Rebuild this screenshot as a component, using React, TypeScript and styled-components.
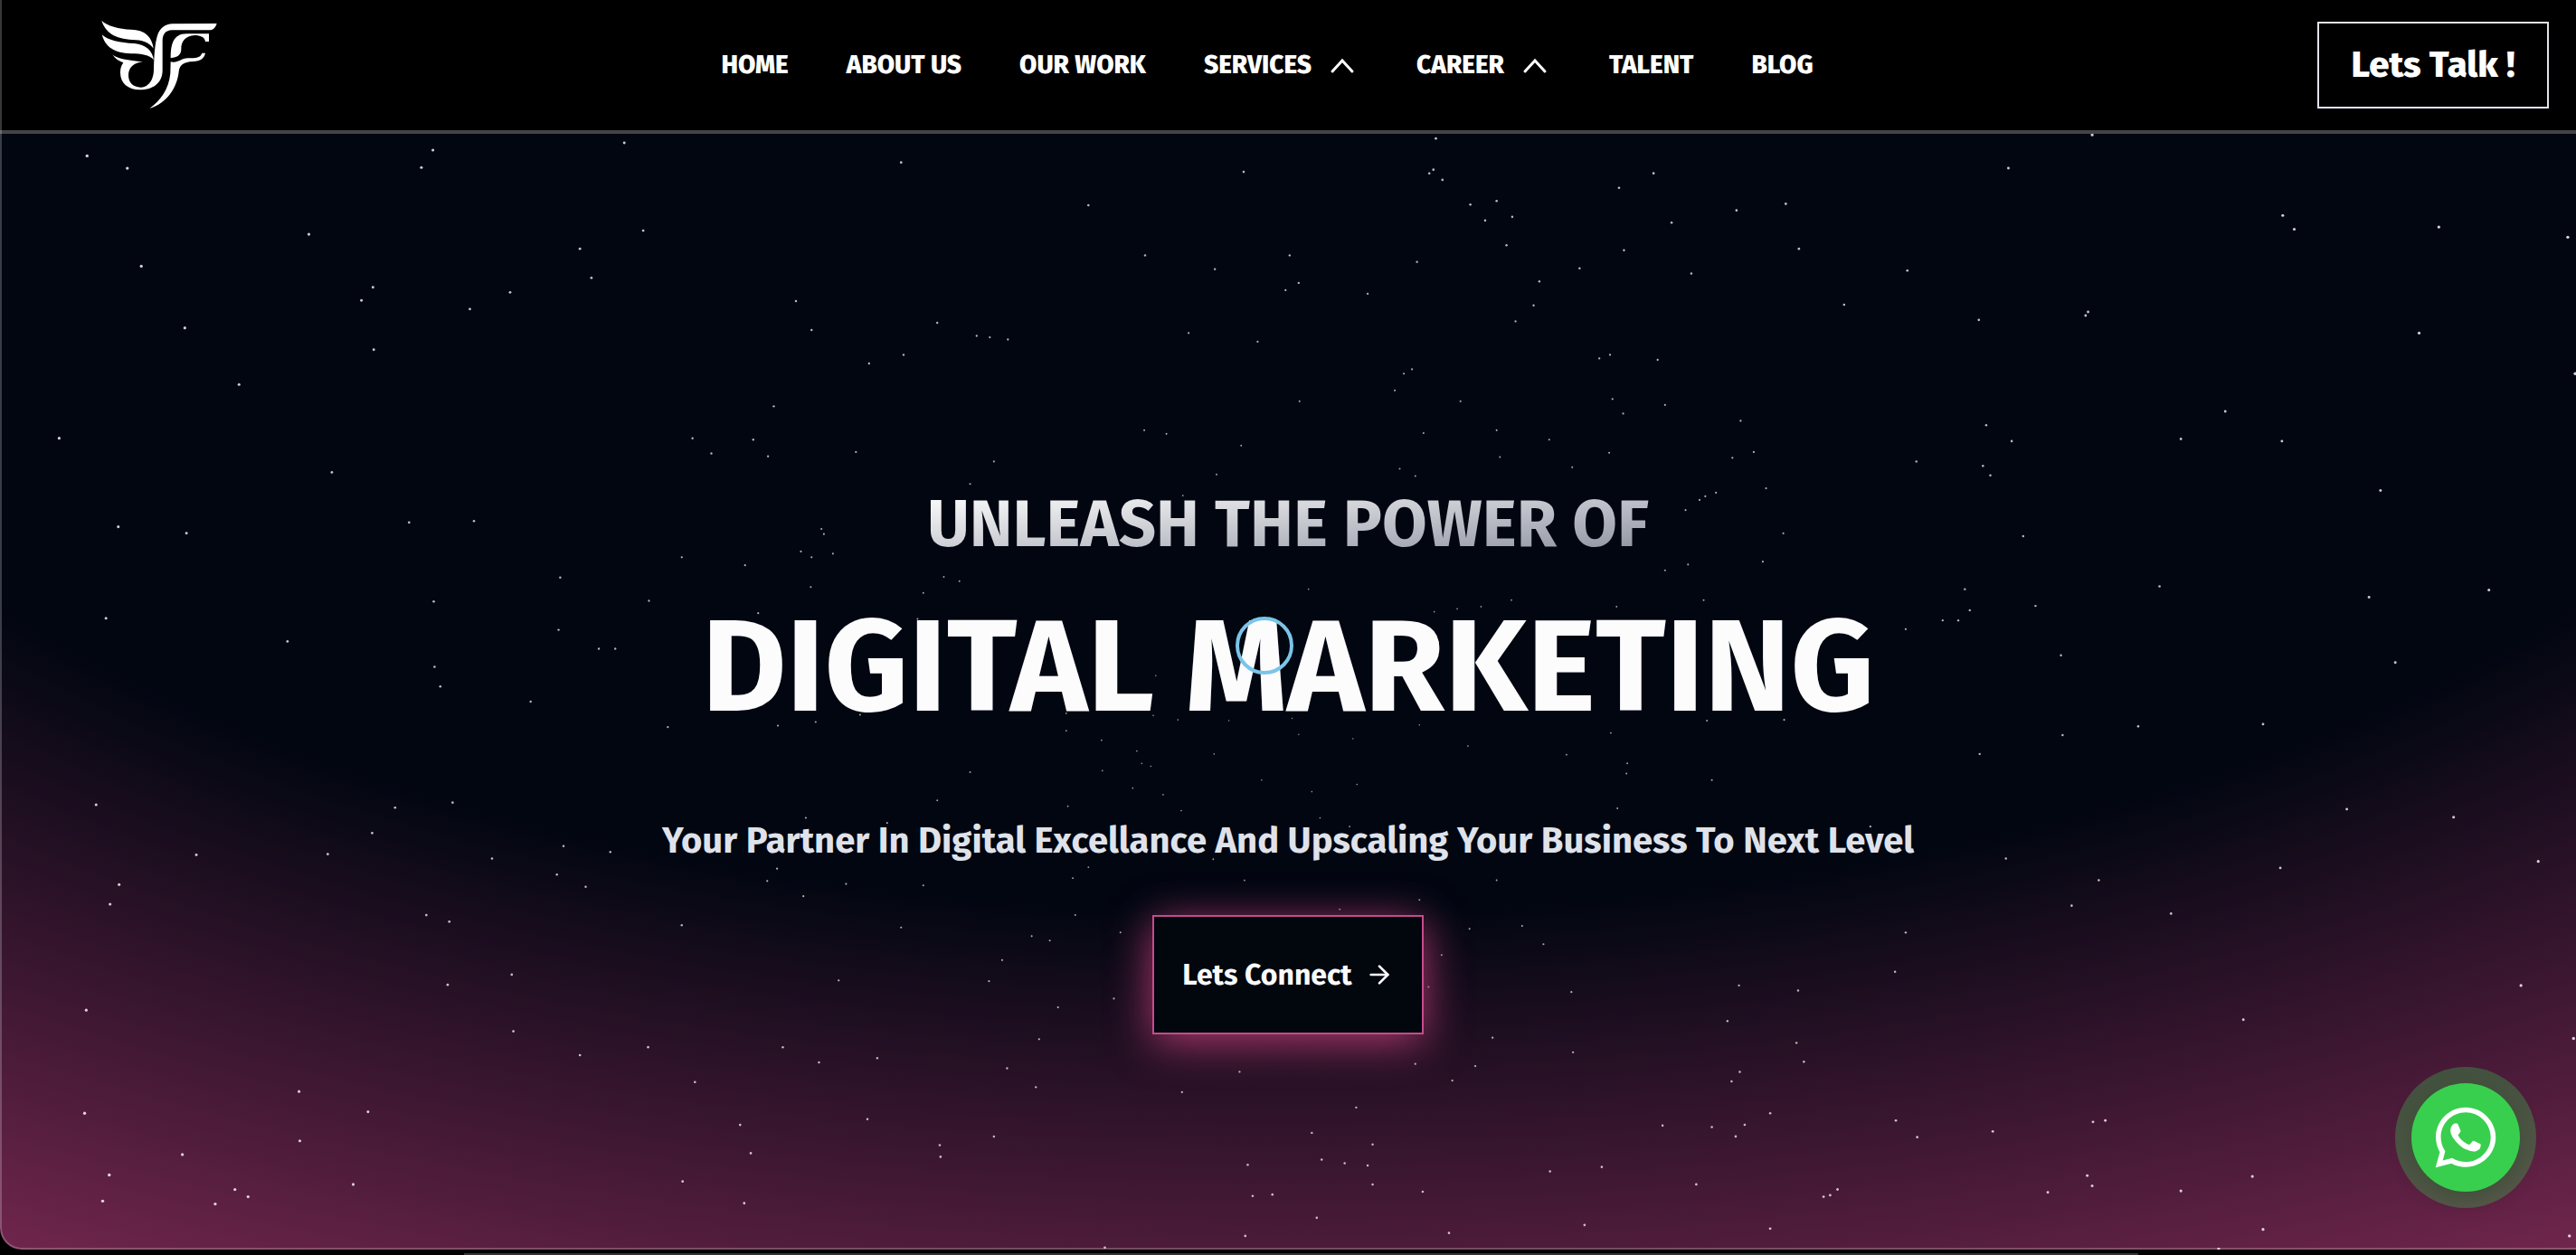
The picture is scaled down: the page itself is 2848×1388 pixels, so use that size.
import React from 'react';
import styled, { createGlobalStyle } from 'styled-components';
import { FaWhatsapp } from 'react-icons/fa';
import { FiArrowRight } from 'react-icons/fi';

const GlobalStyle = createGlobalStyle`
  *, *::before, *::after { box-sizing: border-box; }
  body {
    margin: 0;
    background: #000;
    color: #fff;
    font-family: "Fira Sans", "Open Sans", "Noto Sans", sans-serif;
    -webkit-font-smoothing: antialiased;
  }
`;

const Page = styled.div`
  position: relative;
  display: flex;
  flex-direction: column;
  min-height: 100vh;
  background: #000;
`;

const Frame = styled.div`
  position: relative;
  flex: 1;
  display: flex;
  flex-direction: column;
  margin-bottom: 6px;
  border-bottom-left-radius: 24px;
  overflow: hidden;

  &::after {
    content: '';
    position: absolute;
    inset: 0;
    border: solid rgba(255, 255, 255, 0.22);
    border-width: 0 0 2px 2px;
    border-bottom-left-radius: 24px;
    pointer-events: none;
  }
`;

const Header = styled.header`
  display: grid;
  grid-template-columns: 1fr auto 1fr;
  align-items: center;
  height: 148px;
  padding: 0 30px 0 112px;
  background: #000;
  border-bottom: 4px solid #444446;
`;

const LogoLink = styled.a`
  display: flex;
  justify-self: start;
  color: #fff;
`;

const Nav = styled.nav`
  display: flex;
  align-items: center;
  gap: 64px;
  margin-right: 128px;
`;

const NavLink = styled.a`
  display: flex;
  align-items: center;
  gap: 14px;
  color: #fff;
  font-size: 28px;
  font-weight: 800;
  line-height: 40px;
  text-decoration: none;
  white-space: nowrap;
`;

const Chevron = styled.svg`
  width: 38px;
  height: 32px;
`;

const TalkButton = styled.button`
  justify-self: end;
  width: 256px;
  height: 96px;
  border: 2px solid #e2e4ea;
  background: #000;
  color: #fff;
  font: inherit;
  font-size: 40px;
  font-weight: 800;
  line-height: 48px;
`;

const Hero = styled.main`
  position: relative;
  flex: 1;
  display: flex;
  flex-direction: column;
  align-items: center;
  padding: 396px 48px 96px;
  background: radial-gradient(125% 139% at 50% 0, #010611 50%, #ad376e 100%);
  text-align: center;
`;

const Sky = styled.svg`
  position: absolute;
  inset: 0;
  width: 100%;
  height: 100%;
  fill: #f4e9f2;
`;

const Lead = styled.h2`
  position: relative;
  margin: 0;
  font-size: 72px;
  font-weight: 700;
  line-height: 72px;
  color: transparent;
  background: linear-gradient(to bottom right, #fff, #d1d3d8 40%, #8a8f9e);
  background-clip: text;
  -webkit-background-clip: text;
`;

const Title = styled.h1`
  position: relative;
  margin: 50px 0 0;
  font-size: 144px;
  font-weight: 700;
  line-height: 144px;
  color: #fcfcfd;
`;

const Tagline = styled.p`
  position: relative;
  margin: 96px 0 0;
  font-size: 40px;
  font-weight: 700;
  line-height: 48px;
  color: #dfe2ea;
`;

const ConnectButton = styled.button`
  position: relative;
  display: flex;
  align-items: center;
  justify-content: center;
  gap: 14px;
  width: 300px;
  height: 132px;
  margin-top: 58px;
  border: 2px solid #c64b8c;
  background: #02060d;
  box-shadow: 0 8px 48px #b03a70;
  color: #fafafc;
  font: inherit;
  font-size: 32px;
  font-weight: 700;
  line-height: 40px;
`;

const CursorRing = styled.span`
  position: absolute;
  top: 682px;
  left: calc(50% - 58px);
  width: 64px;
  height: 64px;
  border: 4px solid #7ac5e9;
  border-radius: 50%;
  pointer-events: none;
`;

const ChatLink = styled.a`
  position: fixed;
  right: 62px;
  bottom: 70px;
  display: flex;
  align-items: center;
  justify-content: center;
  width: 120px;
  height: 120px;
  border-radius: 50%;
  background: #39cf4e;
  box-shadow: 0 0 0 18px rgba(57, 207, 79, 0.3), 0 8px 24px rgba(0, 0, 0, 0.3);
  color: #fff;
`;

const NextPanel = styled.div`
  position: absolute;
  left: 18%;
  right: 17%;
  bottom: 0;
  height: 2px;
  background: #343436;
`;

/* Star positions for the two halves of the sky, as points of a 1568 unit square. */
const LEFT_STARS = [
  106,52, 155,69, 527,44, 513,68, 760,34, 1097,61, 1325,120, 1514,74, 376,160, 783,155, 706,180, 720,220, 172,204,
  454,233, 440,251, 621,240, 572,263, 225,289, 455,319, 291,367, 72,441, 404,488, 144,563, 227,572, 129,689, 350,721,
  969,252, 988,292, 1141,282, 1189,300, 1205,302, 1227,305, 1100,326, 1058,338, 1447,296, 1531,308, 1394,189, 1479,208,
  1565,237, 942,397, 843,441, 866,462, 917,443, 935,466, 1042,460, 1210,473, 1181,504, 1393,430, 1420,435, 1511,451,
  1481,491, 1440,520, 498,557, 577,555, 1000,566, 1003,573, 975,597, 988,605, 1014,600, 907,616, 830,605, 682,633,
  987,646, 790,665, 528,666, 923,682, 680,705, 729,731, 749,731, 529,756, 536,783, 646,804, 813,839, 947,837, 993,832,
  1047,822, 1117,690, 1124,654, 1149,632, 1168,638, 1407,768, 1298,820, 1298,844, 1341,857, 1384,872, 1390,889, 1401,893,
  1342,899, 1379,923, 1416,932, 1404,823, 1434,829, 1496,830, 1478,876, 1536,912, 1181,901, 1141,940, 1300,948, 1438,954,
  981,964, 1080,971, 117,946, 481,950, 551,943, 453,985, 239,1015, 399,1014, 599,1020, 686,1003, 743,1011, 678,1042,
  713,1059, 145,1056, 134,1083, 519,1098, 547,1107, 946,1034, 934,1051, 978,1072, 1030,1055, 1124,1057, 830,1112,
  1097,1115, 1306,1047, 1325,1032, 1309,1098, 1256,1127, 1278,1133, 1364,1122, 1515,1050, 1477,1021, 1220,1160,
  1021,1188, 1204,1189, 1288,1225, 1356,1213, 545,1194, 623,1180, 105,1229, 625,1258, 789,1280, 706,1291, 953,1280,
  997,1301, 1068,1295, 1265,1269, 1226,1309, 1261,1335, 1439,1342, 1509,1314, 846,1328, 364,1341, 448,1369, 103,1371,
  365,1409, 901,1387, 1056,1379, 1210,1403, 914,1426, 1144,1415, 1145,1431, 831,1465, 906,1495, 222,1428, 133,1456,
  286,1476, 302,1486, 430,1469, 262,1496, 125,1492, 1519,1442, 1525,1485, 1549,1483, 1516,1540, 1345,1556,
];

const RIGHT_STARS = [
  180,28, 172,76, 177,71, 188,85, 222,119, 254,114, 240,141, 273,136, 266,175, 403,96, 445,76, 467,144, 546,127, 606,118,
  409,182, 622,180, 877,69, 979,23, 1211,134, 1225,153, 1401,150, 1558,164, 754,210, 491,214, 355,207, 157,198, 306,225,
  299,258, 277,280, 97,242, 13,227, 2,189, 677,257, 841,278, 974,267, 971,272, 1377,296, 1567,352, 379,331, 392,326,
  450,333, 151,346, 141,352, 130,375, 14,390, 210,390, 395,387, 408,407, 459,395, 551,417, 165,434, 254,430, 318,443,
  258,467, 136,483, 155,493, 346,481, 391,461, 541,468, 567,460, 582,510, 501,526, 508,521, 521,516, 484,540, 850,423,
  881,445, 765,473, 846,479, 855,492, 1087,442, 1141,404, 1210,445, 1330,513, 895,576, 603,572, 578,611, 487,615,
  459,623, 506,664, 400,673, 272,664, 235,673, 178,680, 206,676, 25,649, 824,649, 830,678, 797,692, 816,692, 752,704,
  910,672, 1061,645, 1316,660, 1462,650, 1348,750, 941,740, 1035,838, 943,850, 1187,835, 842,876, 510,830, 604,829,
  393,847, 339,877, 219,865, 160,836, 79,855, 13,849, 5,827, 84,918, 29,928, 39,964, 413,889, 412,903, 516,912,
  401,951, 75,976, 709,976, 874,1020, 987,1050, 954,1085, 1075,1096, 1208,1033, 1289,952, 1419,963, 1522,1024, 254,1050,
  160,1077, 63,1090, 221,1117, 285,1113, 311,1138, 187,1153, 171,1197, 345,1204, 549,1195, 621,1202, 739,1176, 752,1122,
  535,1244, 619,1274, 628,1300, 550,1314, 540,1327, 347,1287, 249,1267, 228,1306, 200,1326, 155,1303, 1163,1242,
  1501,1195, 1565,1268, 83,1363, 29,1398, 103,1414, 456,1388, 516,1390, 556,1387, 545,1403, 587,1371, 740,1381, 766,1404,
  858,1396, 980,1383, 995,1381, 41,1435, 69,1440, 97,1443, 103,1469, 164,1479, 319,1451, 382,1445, 497,1469, 652,1486,
  660,1484, 669,1476, 925,1480, 973,1457, 979,1471, 1087,1478, 1174,1458, 1187,1531, 587,1530, 361,1525, 196,1536,
  35,1515, 1133,1558, 1560,1540,
];

function toStars(points: number[], half: number) {
  const stars: { x: number; y: number; r: number }[] = [];
  for (let i = 0; i < points.length; i += 2) {
    const x = (half + points[i] / 1568) * 50;
    const y = (points[i + 1] * 1.02 - 22) / 15.68;
    const distance = Math.hypot((x - 50) / 50, (y - 50) / 70);
    stars.push({ x, y, r: 0.7 + Math.min(distance, 1.1) * 0.9 });
  }
  return stars;
}

const STARS = [...toStars(LEFT_STARS, 0), ...toStars(RIGHT_STARS, 1)];

const NAV_ITEMS = [
  { label: 'HOME' },
  { label: 'ABOUT US' },
  { label: 'OUR WORK' },
  { label: 'SERVICES', menu: true },
  { label: 'CAREER', menu: true },
  { label: 'TALENT' },
  { label: 'BLOG' },
];

function Logo() {
  return (
    <svg width="130" height="100" viewBox="66 68 390 300" fill="currentColor" aria-hidden="true">
      <path d="M67 70C85 88 125 98 165 100C210 100 235 125 239 163C225 142 200 134 170 134C110 130 80 110 67 70Z" />
      <path d="M68 117C85 135 130 145 175 146C215 150 235 170 240 200C225 185 200 180 165 180C110 178 80 160 68 117Z" />
      <path
        fillRule="evenodd"
        d="M103 183C118 197 155 203 204 207C175 210 156 225 156 252C156 276 172 292 197 292C225 290 239 265 240 235C241 190 243 150 252 120C260 95 278 82 302 81L449 80C445 93 437 101 428 102L300 102C280 103 270 115 269 135L269 235C269 275 240 300 193 300C155 300 129 278 129 243C129 228 133 218 139 210C125 205 112 197 103 183Z"
      />
      <path d="M296 195C296 160 300 130 325 118C335 114 345 114 360 114L423 114L423 140L411 140C409 125 395 119 375 119C345 121 330 140 331 165C331 185 318 192 296 195Z" />
      <path d="M296 207C310 210 322 205 332 200C345 193 360 196 378 194C392 192 397 186 400 178L411 178C408 195 395 205 370 206C340 207 325 218 323 240C318 290 285 345 226 362C262 335 290 300 295 245Z" />
    </svg>
  );
}

export default function App() {
  return (
    <Page>
      <GlobalStyle />
      <Frame>
        <Header>
          <LogoLink href="#" aria-label="Home page">
            <Logo />
          </LogoLink>
          <Nav>
            {NAV_ITEMS.map((item) => (
              <NavLink href="#" key={item.label}>
                {item.label}
                {item.menu && (
                  <Chevron viewBox="0 0 38 32" fill="none" stroke="#fff" strokeWidth="3" strokeLinecap="round" aria-hidden="true">
                    <path d="M9 23L20 11L31 23" />
                  </Chevron>
                )}
              </NavLink>
            ))}
          </Nav>
          <TalkButton type="button">Lets Talk !</TalkButton>
        </Header>
        <Hero>
          <Sky aria-hidden="true">
            {STARS.map((star, i) => (
              <circle key={i} cx={`${star.x}%`} cy={`${star.y}%`} r={star.r} opacity={0.4 + star.r * 0.3} />
            ))}
          </Sky>
          <Lead>UNLEASH THE POWER OF</Lead>
          <Title>DIGITAL MARKETING</Title>
          <Tagline>Your Partner In Digital Excellance And Upscaling Your Business To Next Level</Tagline>
          <ConnectButton type="button">
            Lets Connect
            <FiArrowRight size={32} aria-hidden="true" />
          </ConnectButton>
        </Hero>
        <CursorRing />
      </Frame>
      <NextPanel />
      <ChatLink href="#" aria-label="Chat on WhatsApp">
        <FaWhatsapp size={76} aria-hidden="true" />
      </ChatLink>
    </Page>
  );
}
